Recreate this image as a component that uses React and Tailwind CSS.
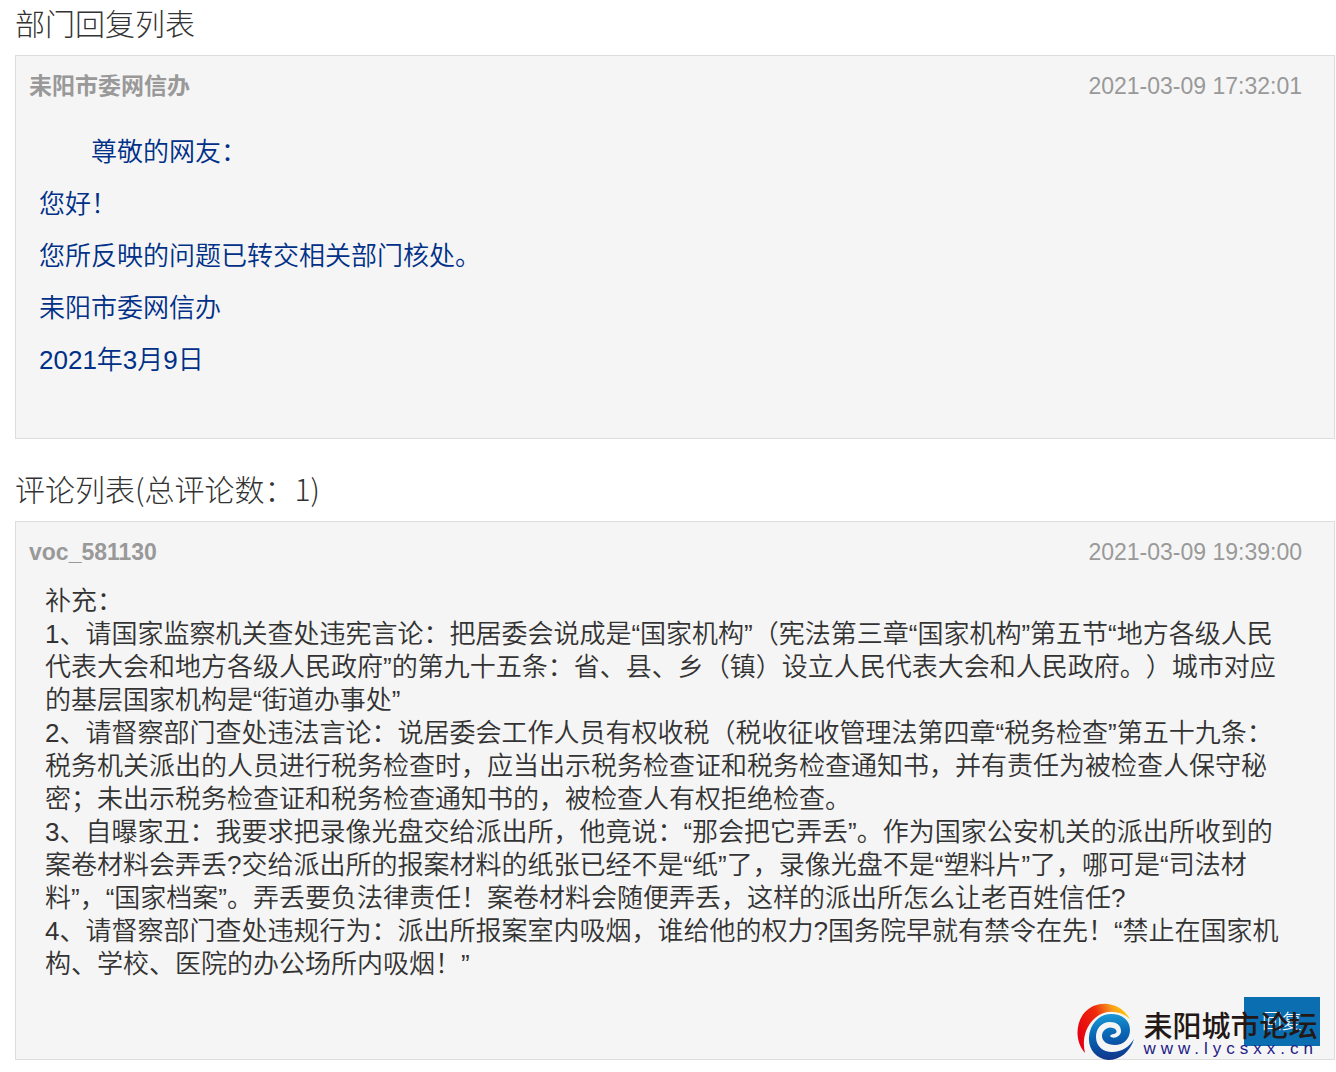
import React from 'react';

const reply = {
  author: '耒阳市委网信办',
  time: '2021-03-09 17:32:01',
  greeting: '尊敬的网友：',
  lines: ['您好！', '您所反映的问题已转交相关部门核处。', '耒阳市委网信办', '2021年3月9日'],
};

const comment = {
  author: 'voc_581130',
  time: '2021-03-09 19:39:00',
  lines: [
    '补充：',
    '1、请国家监察机关查处违宪言论：把居委会说成是“国家机构”（宪法第三章“国家机构”第五节“地方各级人民代表大会和地方各级人民政府”的第九十五条：省、县、乡（镇）设立人民代表大会和人民政府。）城市对应的基层国家机构是“街道办事处”',
    '2、请督察部门查处违法言论：说居委会工作人员有权收税（税收征收管理法第四章“税务检查”第五十九条：税务机关派出的人员进行税务检查时，应当出示税务检查证和税务检查通知书，并有责任为被检查人保守秘密；未出示税务检查证和税务检查通知书的，被检查人有权拒绝检查。',
    '3、自曝家丑：我要求把录像光盘交给派出所，他竟说：“那会把它弄丢”。作为国家公安机关的派出所收到的案卷材料会弄丢?交给派出所的报案材料的纸张已经不是“纸”了，录像光盘不是“塑料片”了，哪可是“司法材料”，“国家档案”。弄丢要负法律责任！案卷材料会随便弄丢，这样的派出所怎么让老百姓信任?',
    '4、请督察部门查处违规行为：派出所报案室内吸烟，谁给他的权力?国务院早就有禁令在先！“禁止在国家机构、学校、医院的办公场所内吸烟！”',
  ],
};

const SectionTitle = ({ children }) => (
  <h2 className="mb-[11px] font-['Noto_Sans_CJK_SC',sans-serif] text-[30px] leading-[44px] font-light text-[#333]">
    {children}
  </h2>
);

const Card = ({ author, time, children }) => (
  <article className="relative border border-[#dcdddd] bg-[#f5f5f5]">
    <header className="flex h-[60px] items-center justify-between pr-8 pl-[13px] text-[23px] text-[#999]">
      <h3 className="font-bold">{author}</h3>
      <time>{time}</time>
    </header>
    {children}
  </article>
);

const Swirl = () => (
  <svg viewBox="0 0 58 58" className="h-[58px] w-[58px] shrink-0" aria-hidden="true">
    <defs>
      <linearGradient id="flame" x1="0" y1="0.6" x2="1" y2="0.2">
        <stop offset="0" stopColor="#e60012" />
        <stop offset="0.45" stopColor="#ee2a0c" />
        <stop offset="0.75" stopColor="#f9a01b" />
        <stop offset="1" stopColor="#fdd000" />
      </linearGradient>
      <linearGradient id="wave" x1="0.4" y1="0" x2="0.5" y2="1">
        <stop offset="0" stopColor="#1c9ad6" />
        <stop offset="0.35" stopColor="#0b6fba" />
        <stop offset="0.7" stopColor="#0a4ea2" />
        <stop offset="1" stopColor="#12358a" />
      </linearGradient>
    </defs>
    <path
      d="M8 50C-2 39 -2 20 8 9C20 -4 43 -2 53 16C43 7 27 6 17 16C8 25 5 37 8 50Z"
      fill="url(#flame)"
    />
    <path
      d="M57 36C53 49 43 57 31 57C19 56 11 46 12 34C13 21 22 11 34 11C46 11 53 18 53 27C53 36 46 42 38 42C30 42 25 38 25 33C25 27 31 23 36 25C40 26 41 30 37 31C34 31 32 33 34 34C38 36 44 33 44 28C44 22 39 19 33 19C24 19 19 26 19 34C19 43 26 49 35 49C45 49 52 44 57 36Z"
      fill="url(#wave)"
    />
  </svg>
);

const Watermark = () => (
  <div className="pointer-events-none absolute right-4 -bottom-0.5 flex items-end gap-2">
    <Swirl />
    <div className="flex flex-col pb-1">
      <span className="text-[29px] leading-[26px] font-medium text-[#231815]">耒阳城市论坛</span>
      <span className="text-[17px] leading-[17px] tracking-[5px] text-[#1d2088]">www.lycsxx.cn</span>
    </div>
  </div>
);

export default function App() {
  return (
    <main className="bg-white pr-px pl-[15px] font-['Liberation_Sans','Noto_Sans_CJK_SC',sans-serif] [text-spacing-trim:space-all]">
      <section>
        <SectionTitle>部门回复列表</SectionTitle>
        <Card author={reply.author} time={reply.time}>
          <div className="mt-5 space-y-[19px] px-[23px] pb-[61px] text-[26px] leading-[33px] font-[350] text-[#003087]">
            <p className="indent-[2em]">{reply.greeting}</p>
            {reply.lines.map((line) => (
              <p key={line}>{line}</p>
            ))}
          </div>
        </Card>
      </section>

      <section className="mt-[27px]">
        <SectionTitle>评论列表(总评论数：1)</SectionTitle>
        <Card author={comment.author} time={comment.time}>
          <div className="pt-[3px] pr-[53px] pl-[29px] text-[26px] leading-[33px] font-[350] text-[#333]">
            {comment.lines.map((line) => (
              <p key={line}>{line}</p>
            ))}
          </div>
          <div className="mt-4 flex justify-end pr-[14px] pb-[13px]">
            <button type="button" className="h-[49px] w-[76px] bg-[#0a6eb0] text-[20px] font-light text-white">
              回复
            </button>
          </div>
          <Watermark />
        </Card>
      </section>
    </main>
  );
}
